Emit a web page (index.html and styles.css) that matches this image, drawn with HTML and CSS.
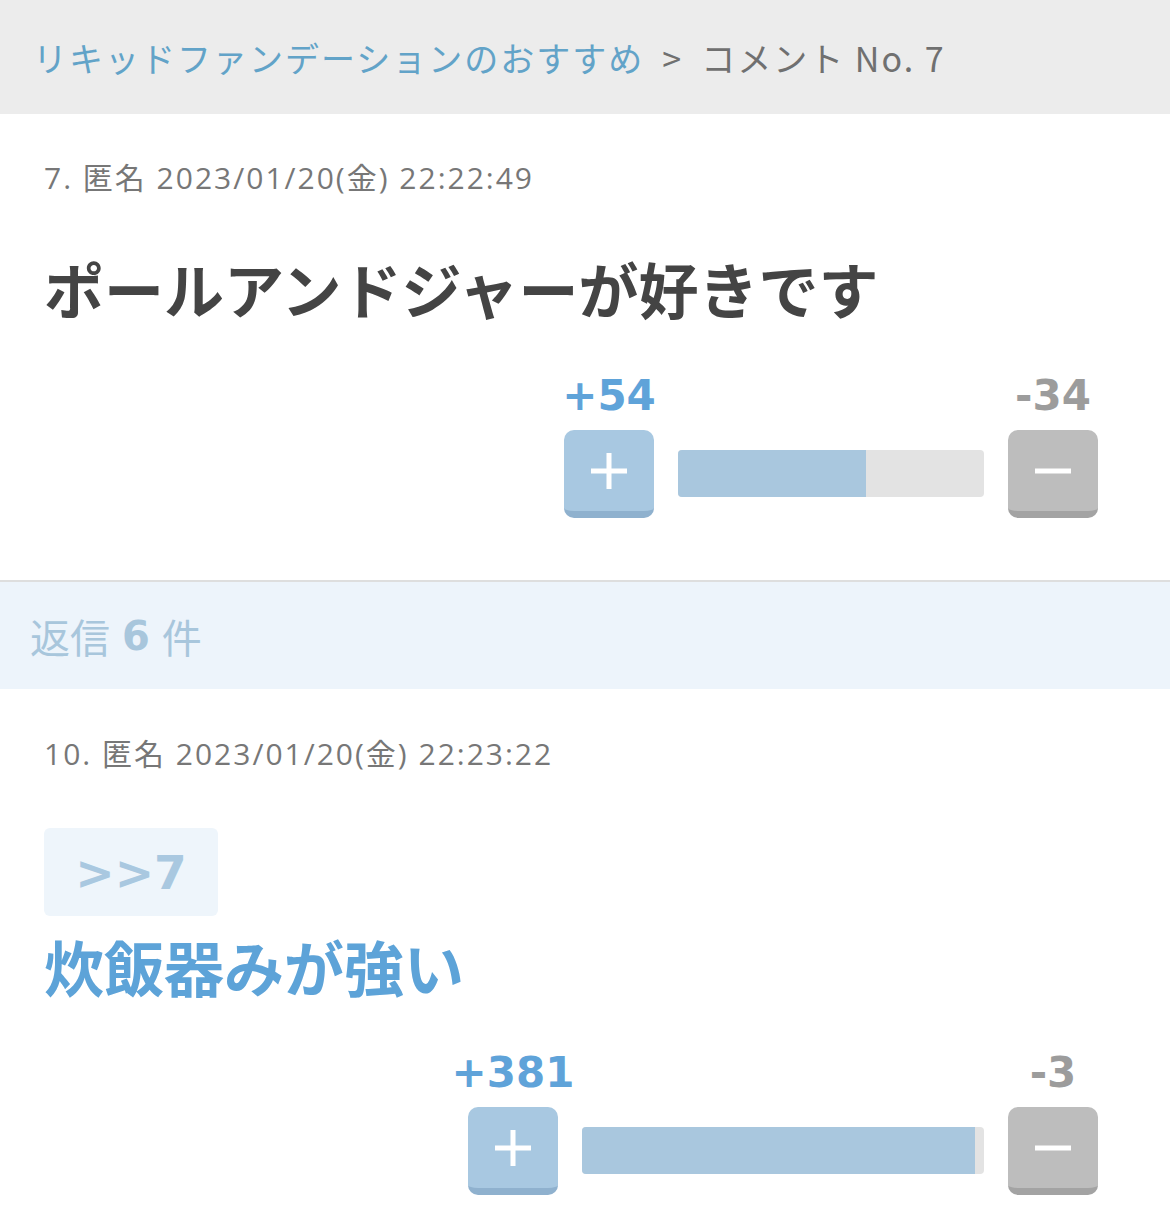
FILE: index.html
```html
<!DOCTYPE html>
<html lang="ja">
<head>
    <meta charset="UTF-8">
    <title>コメント No. 7</title>
    <meta name="viewport" content="width=device-width, initial-scale=1.0">
    <link rel="stylesheet" href="styles.css">
</head>
<body>
    <div class="breadcrumb">
        <a href="#">リキッドファンデーションのおすすめ</a>
        <span class="sep">&gt;</span>
        <span>コメント No. 7</span>
    </div>

    <div class="comment comment-main">
        <p class="meta">7. 匿名 2023/01/20(金) 22:22:49</p>
        <p class="body">ポールアンドジャーが好きです</p>
        <div class="vote">
            <span class="count plus-count">+54</span>
            <span class="count minus-count">-34</span>
            <button class="vote-btn plus" aria-label="プラス">
                <svg width="40" height="40" viewBox="0 0 40 40"><path d="M20 2v36M2 20h36" stroke="#fff" stroke-width="5"/></svg>
            </button>
            <div class="bar"><div class="fill" style="width: 61.4%"></div></div>
            <button class="vote-btn minus" aria-label="マイナス">
                <svg width="40" height="40" viewBox="0 0 40 40"><path d="M2 20h36" stroke="#fff" stroke-width="5"/></svg>
            </button>
        </div>
    </div>

    <div class="replies">返信 <b>6</b> 件</div>

    <div class="comment comment-reply">
        <p class="meta">10. 匿名 2023/01/20(金) 22:23:22</p>
        <a href="#" class="anchor">&gt;&gt;7</a>
        <p class="body body-blue">炊飯器みが強い</p>
        <div class="vote vote-wide">
            <span class="count plus-count">+381</span>
            <span class="count minus-count">-3</span>
            <button class="vote-btn plus" aria-label="プラス">
                <svg width="40" height="40" viewBox="0 0 40 40"><path d="M20 2v36M2 20h36" stroke="#fff" stroke-width="5"/></svg>
            </button>
            <div class="bar"><div class="fill" style="width: 97.8%"></div></div>
            <button class="vote-btn minus" aria-label="マイナス">
                <svg width="40" height="40" viewBox="0 0 40 40"><path d="M2 20h36" stroke="#fff" stroke-width="5"/></svg>
            </button>
        </div>
    </div>
</body>
</html>
```

FILE: styles.css
```css
body {
    font-family: 'Open Sans', 'Noto Sans CJK JP', sans-serif;
    background: #fff;
    color: #444;
    margin: 0;
}
p {
    margin: 0;
}
.breadcrumb {
    background: #ececec;
    height: 114px;
    display: flex;
    align-items: center;
    gap: 18px;
    padding-left: 33px;
    font-family: 'Noto Sans CJK JP', sans-serif;
    font-size: 34px;
    letter-spacing: 2px;
    color: #707070;
}
.breadcrumb a {
    color: #62a3c8;
    text-decoration: none;
}
.comment {
    padding: 44px 72px 62px 44px;
}
.comment-main {
    border-bottom: 2px solid #dedede;
}
.comment-reply {
    padding-top: 45px;
}
.meta {
    font-size: 30px;
    line-height: 40px;
    letter-spacing: 2px;
    color: #777;
}
.body {
    font-family: 'Noto Sans CJK JP', sans-serif;
    font-weight: bold;
    font-size: 60px;
    line-height: 80px;
    margin-top: 50px;
    color: #444;
}
.body-blue {
    color: #5da3d8;
    margin-top: 10px;
}
.anchor {
    display: inline-flex;
    align-items: center;
    justify-content: center;
    margin-top: 54px;
    width: 174px;
    height: 88px;
    background: #eef5fb;
    border-radius: 6px;
    font-family: 'DejaVu Sans', sans-serif;
    font-weight: bold;
    font-size: 47px;
    color: #a9c8e0;
    text-decoration: none;
}
.vote {
    display: grid;
    grid-template-columns: 90px 1fr 90px;
    column-gap: 24px;
    row-gap: 12px;
    align-items: center;
    width: 534px;
    margin: 46px 0 0 auto;
}
.vote-wide {
    width: 630px;
    margin-top: 45px;
}
.count {
    display: flex;
    justify-content: center;
    white-space: nowrap;
    font-family: 'DejaVu Sans', sans-serif;
    font-weight: bold;
    font-size: 42px;
    line-height: 44px;
}
.plus-count {
    grid-column: 1;
    color: #5fa3d9;
}
.minus-count {
    grid-column: 3;
    color: #9c9c9c;
}
.vote-btn {
    width: 90px;
    height: 88px;
    border: none;
    border-bottom: 7px solid;
    border-radius: 10px;
    padding: 0;
    display: flex;
    align-items: center;
    justify-content: center;
    cursor: pointer;
}
.plus {
    background: #a8c8e1;
    border-color: #8fb1ce;
}
.minus {
    background: #bdbdbd;
    border-color: #a3a3a3;
}
.bar {
    height: 47px;
    background: #e3e3e3;
    border-radius: 4px;
    overflow: hidden;
    margin-bottom: 2px;
}
.fill {
    height: 100%;
    background: #a9c7de;
}
.replies {
    background: #edf4fb;
    height: 107px;
    display: flex;
    align-items: center;
    gap: 12px;
    padding-left: 30px;
    font-family: 'Noto Sans CJK JP', sans-serif;
    font-size: 40px;
    color: #a8c6dc;
}
.replies b {
    font-family: 'DejaVu Sans', sans-serif;
}
```
